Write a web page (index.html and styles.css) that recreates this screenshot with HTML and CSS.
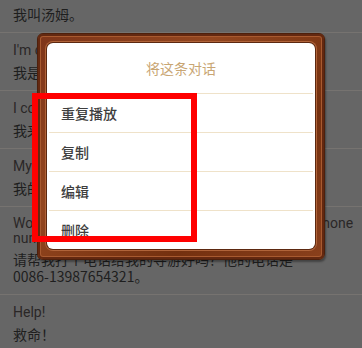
FILE: index.html
```html
<!DOCTYPE html>
<html lang="zh">
<head>
<meta charset="utf-8">
<link rel="stylesheet" href="styles.css">
</head>
<body>
<div class="screen">
  <ul class="list">
    <li class="row"><p class="en">My name is Tom.</p><p class="zh">我叫汤姆。</p></li>
    <li class="row"><p class="en">I'm coming.</p><p class="zh">我是来的。</p></li>
    <li class="row"><p class="en">I come from China.</p><p class="zh">我来自中国。</p></li>
    <li class="row"><p class="en">My passport is lost.</p><p class="zh">我的护照丢了。</p></li>
    <li class="row long"><p class="en">Would you please call my tour guide for me? His phone<br>number is 0086-13987654321.</p><p class="zh">请帮我打个电话给我的导游好吗？他的电话是<br>0086-13987654321。</p></li>
    <li class="row"><p class="en">Help!</p><p class="zh">救命！</p></li>
  </ul>

  <div class="dialog">
    <div class="panel">
      <div class="title">将这条对话</div>
      <div class="item">重复播放</div>
      <div class="item">复制</div>
      <div class="item">编辑</div>
      <div class="item last">删除</div>
    </div>
  </div>

  <div class="highlight"></div>
</div>
</body>
</html>
```
FILE: styles.css
```css
html, body {
  margin: 0;
  padding: 0;
}
body {
  width: 362px;
  height: 348px;
  overflow: hidden;
  background: #666666;
  font-family: Roboto, "Noto Sans CJK SC", sans-serif;
}
.screen {
  position: relative;
  width: 362px;
  height: 348px;
  overflow: hidden;
}
.list {
  list-style: none;
  margin: -25px 0 0 0;
  padding: 0;
}
.row {
  padding: 9px 13px 9px 13px;
  border-bottom: 1px solid #767370;
}
.row p {
  margin: 0;
}
.en {
  font-size: 14px;
  line-height: 16px;
  color: #2a2626;
  white-space: nowrap;
}
.zh {
  margin-top: 5px !important;
  font-size: 14px;
  line-height: 18px;
  color: #1e1e1e;
  font-family: "Noto Sans CJK SC", sans-serif;
  white-space: nowrap;
}
.row.long .en {
  line-height: 15px;
}
.row.long .zh {
  line-height: 17px;
}
.dialog {
  position: absolute;
  left: 37px;
  top: 33px;
  width: 268px;
  padding: 9px 9px 10px 9px;
  background: linear-gradient(135deg, #7e3519 0%, #93461f 35%, #74300f 70%, #8a401c 100%);
  border: 1px solid #4e200c;
  border-radius: 6px;
  box-shadow: inset 0 0 0 2px #632810, inset 0 0 0 3px #a85a30, 1px 2px 2px rgba(0,0,0,0.35);
}
.panel {
  background: #ffffff;
  border-radius: 6px;
  box-shadow: 0 0 0 1px #5c2810, 0 0 0 2px #b0643a;
  padding: 0 2px;
  font-family: "Noto Sans CJK SC", sans-serif;
}
.title {
  height: 50px;
  line-height: 50px;
  text-align: center;
  font-size: 14px;
  color: #c9a674;
  border-bottom: 1px solid #efe2c9;
}
.item {
  height: 38px;
  line-height: 38px;
  padding-left: 12px;
  font-size: 14px;
  font-weight: 500;
  color: #3e3e3e;
  border-bottom: 1px solid #efe2c9;
}
.item.last {
  border-bottom: none;
}
.highlight {
  position: absolute;
  left: 32px;
  top: 93px;
  width: 153px;
  height: 137px;
  border: 6px solid #ff0000;
}
```
